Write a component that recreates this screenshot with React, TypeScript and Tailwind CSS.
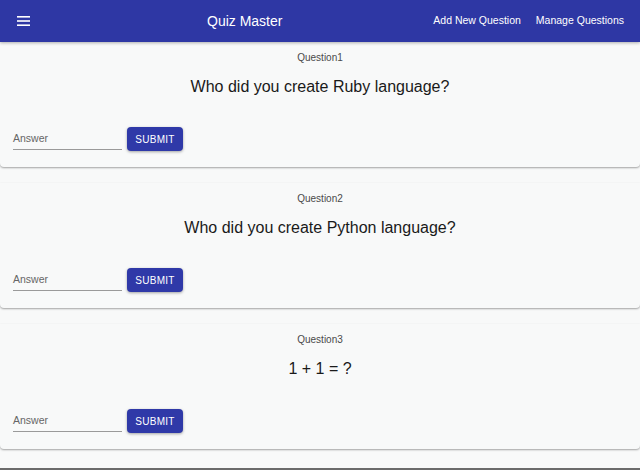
const questions = [
  { id: 1, label: 'Question1', text: 'Who did you create Ruby language?' },
  { id: 2, label: 'Question2', text: 'Who did you create Python language?' },
  { id: 3, label: 'Question3', text: '1 + 1 = ?' }
];

function QuestionCard({ label, text }: { label: string; text: string }) {
  return (
    <div className="h-[125px] bg-[#f8f9f9] rounded-b shadow-[0_1px_2px_rgba(0,0,0,0.35)] px-[13px] pt-[9px]">
      <div className="text-center text-[10px] text-[#4a4a4a] leading-[14px]">{label}</div>
      <div className="text-center text-[16px] text-[#1a1a1a] leading-[20px] mt-[12px]">{text}</div>
      <div className="flex items-center gap-[5px] mt-[30px]">
        <div className="w-[109px] h-[22px] border-b border-[#9a9a9a] flex items-center text-[10.5px] text-[#666]">
          Answer
        </div>
        <button className="h-[24px] w-[56px] rounded bg-[#2f39a8] text-white text-[10px] font-medium tracking-wide shadow-[0_1px_3px_rgba(0,0,0,0.35)]">
          SUBMIT
        </button>
      </div>
    </div>
  );
}

export default function App() {
  return (
    <div className="w-[640px] h-[470px] bg-[#f8f9f9] overflow-hidden flex flex-col font-['Liberation_Sans',Arial,sans-serif]">
      <header className="h-[42px] bg-[#2e37a4] shadow-[0_1px_3px_rgba(0,0,0,0.3)] flex items-center text-white relative z-10 shrink-0">
        <svg width="13" height="10" viewBox="0 0 13 10" className="ml-[17px]">
          <rect x="0" y="0" width="13" height="1.6" fill="white" />
          <rect x="0" y="4.2" width="13" height="1.6" fill="white" />
          <rect x="0" y="8.4" width="13" height="1.6" fill="white" />
        </svg>
        <div className="absolute left-[207px] text-[14px]">Quiz Master</div>
        <nav className="ml-auto flex items-center gap-[15px] mr-[16px] text-[10.5px]">
          <a href="#">Add New Question</a>
          <a href="#">Manage Questions</a>
        </nav>
      </header>
      <div className="flex flex-col gap-[16px]">
        {questions.map((q) => (
          <QuestionCard key={q.id} label={q.label} text={q.text} />
        ))}
      </div>
      <div className="mt-auto h-[2px] bg-[#6b6b6b]" />
    </div>
  );
}
